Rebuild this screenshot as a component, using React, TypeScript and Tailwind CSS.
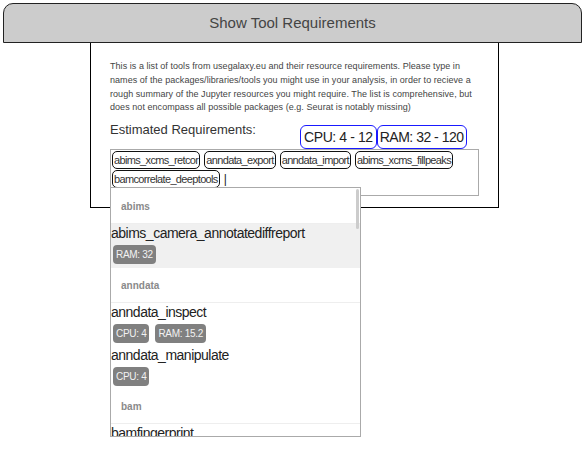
import React from "react";

const Badge = ({ children }: { children: React.ReactNode }) => (
  <span className="inline-flex h-[19px] items-center rounded-[4px] bg-[#808080] px-[3px] text-[10px] tracking-[-0.3px] text-[#f2f2f2]">
    {children}
  </span>
);

const Header = ({ children }: { children: React.ReactNode }) => (
  <div className="flex h-[35px] items-center border-b border-[#eeeeee] pl-[10px] text-[10px] font-bold text-[#8a8a8a]">
    {children}
  </div>
);

const Option = ({
  name,
  badges,
  active,
}: {
  name: string;
  badges: string[];
  active?: boolean;
}) => (
  <div className={`pb-[3px] ${active ? "bg-[#f0f0f0] pb-[4px]" : ""}`}>
    <div className="h-[18px] text-[14px] leading-[18px] tracking-[-0.5px] text-[#222]">{name}</div>
    <div className="mt-[3px] flex gap-[6px] pl-[2px]">
      {badges.map((b) => (
        <Badge key={b}>{b}</Badge>
      ))}
    </div>
  </div>
);

const Tag = ({ children }: { children: React.ReactNode }) => (
  <span className="inline-flex h-[18px] items-center rounded-[5px] border border-[#111] px-px text-[11px] leading-none tracking-[-0.65px] text-[#333]">
    {children}
  </span>
);

export default function App() {
  return (
    <div className="min-h-[455px] bg-white font-['Liberation_Sans',Arial,sans-serif]">
      <div className="px-[3px] pt-[3px]">
        <button className="flex h-[40px] w-full items-center justify-center rounded-t-[10px] border border-[#222] bg-[#cccccc] text-[15px] text-[#444]">
          Show Tool Requirements
        </button>
      </div>
      <div className="relative ml-[90px] h-[165px] w-[409px] border border-t-0 border-black px-[19px] pt-[17px]">
        <p className="text-[9px] leading-[13.75px] tracking-[0.05px] text-[#444]">
          This is a list of tools from usegalaxy.eu and their resource requirements. Please type in
          names of the packages/libraries/tools you might use in your analysis, in order to recieve a
          rough summary of the Jupyter resources you might require. The list is comprehensive, but
          does not encompass all possible packages (e.g. Seurat is notably missing)
        </p>
        <div className="mt-[7px] flex items-start">
          <div className="w-[190px] text-[13px] leading-[16px] text-[#333]">Estimated Requirements:</div>
          <div className="mt-[3px] flex">
            <div className="flex h-[24px] items-center rounded-[6px] border border-[#1a1aff] px-[3px] text-[14px] tracking-[-0.4px] text-[#222]">
              CPU: 4 - 12
            </div>
            <div className="flex h-[24px] items-center rounded-[6px] border border-[#1a1aff] px-[2px] text-[14px] tracking-[-0.5px] text-[#222]">
              RAM: 32 - 120
            </div>
          </div>
        </div>
        <div className="relative">
          <div className="flex flex-wrap items-center gap-x-[4px] gap-y-[1px] border border-[#aaaaaa] px-px pb-[7px] pt-px">
            <Tag>abims_xcms_retcor</Tag>
            <Tag>anndata_export</Tag>
            <Tag>anndata_import</Tag>
            <Tag>abims_xcms_fillpeaks</Tag>
            <Tag>bamcorrelate_deeptools</Tag>
            <span className="text-[12px] leading-none text-[#222]">|</span>
          </div>
          <div className="absolute left-0 top-[38px] z-10 h-[250px] w-[251px] overflow-hidden border border-[#aaaaaa] bg-white pt-px">
            <div className="absolute right-[1px] top-[1px] z-20 h-[40px] w-[3px] rounded-full bg-[#cccccc]" />
            <Header>abims</Header>
            <Option name="abims_camera_annotatediffreport" badges={["RAM: 32"]} active />
            <Header>anndata</Header>
            <Option name="anndata_inspect" badges={["CPU: 4", "RAM: 15.2"]} />
            <Option name="anndata_manipulate" badges={["CPU: 4"]} />
            <Header>bam</Header>
            <Option name="bamfingerprint" badges={["CPU: 4"]} />
          </div>
        </div>
      </div>
    </div>
  );
}
